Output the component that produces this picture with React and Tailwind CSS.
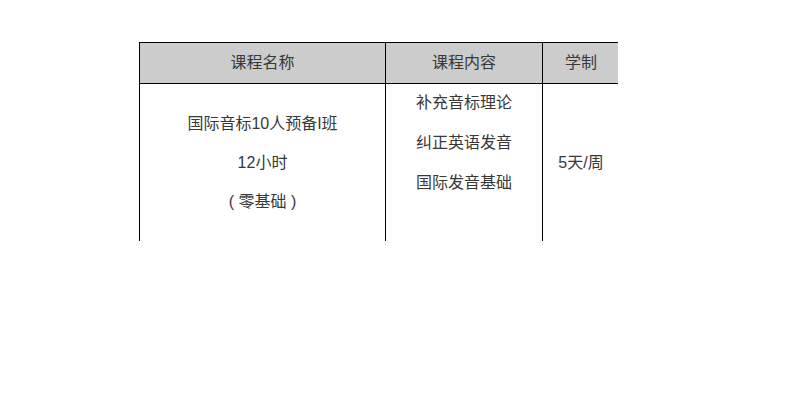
export default function App() {
  return (
    <div className="w-[800px] h-[400px] bg-white overflow-hidden" style={{ fontFamily: '"Liberation Sans", "Noto Sans CJK SC", sans-serif' }}>
      <div className="ml-[139px] mt-[42px] w-[479px] h-[199px] overflow-hidden border-l border-t border-black text-[16px] text-[#383838]">
        <div className="flex h-[41px] bg-[#cccccc] border-b border-black">
          <div className="w-[246px] shrink-0 border-r border-black flex items-center justify-center">课程名称</div>
          <div className="w-[157px] shrink-0 border-r border-black flex items-center justify-center">课程内容</div>
          <div className="w-[76px] shrink-0 flex items-center justify-center">学制</div>
        </div>
        <div className="flex h-[157px]">
          <div className="w-[246px] shrink-0 border-r border-black flex flex-col items-center justify-center leading-[39px]">
            <div>国际音标10人预备I班</div>
            <div>12小时</div>
            <div className="whitespace-pre">( 零基础 )</div>
          </div>
          <div className="w-[157px] shrink-0 border-r border-black flex flex-col items-center leading-[40px] -mt-[1px]">
            <div>补充音标理论</div>
            <div>纠正英语发音</div>
            <div>国际发音基础</div>
          </div>
          <div className="w-[76px] shrink-0 flex items-center justify-center">5天/周</div>
        </div>
      </div>
    </div>
  );
}
